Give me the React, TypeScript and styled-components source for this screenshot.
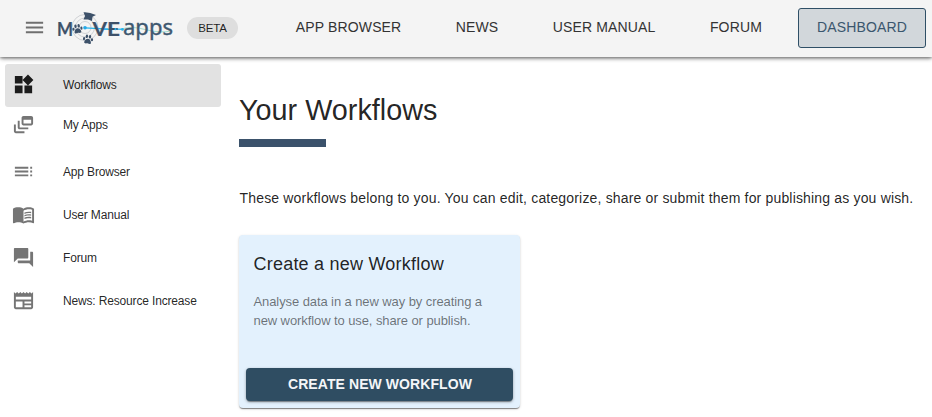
import React from 'react';
import styled, { createGlobalStyle } from 'styled-components';
import type { IconType } from 'react-icons';
import { MdMenu, MdWidgets, MdOutlineDynamicFeed, MdToc, MdMenuBook, MdForum, MdNewspaper } from 'react-icons/md';

const Global = createGlobalStyle`
  * { box-sizing: border-box; }
  body {
    margin: 0;
    background: #fff;
    color: rgba(0, 0, 0, 0.87);
    font-family: "Liberation Sans", Arial, sans-serif;
    overflow: hidden;
  }
`;

const Page = styled.div`
  height: 417px;
  display: flex;
  flex-direction: column;
`;

const Header = styled.header`
  height: 57px;
  flex: none;
  display: flex;
  align-items: center;
  padding: 0 6px 1px 23px;
  background: #f4f4f4;
  box-shadow: 0 2px 4px -1px rgba(0, 0, 0, 0.35), 0 2px 4px rgba(0, 0, 0, 0.2), 0 1px 2px rgba(0, 0, 0, 0.2);
  z-index: 1;
`;

const MenuButton = styled.button`
  display: flex;
  width: 23px;
  height: 23px;
  margin-top: -1px;
  padding: 0;
  border: 0;
  background: none;
  color: #6f6f6f;
  font-size: 23px;
`;

const Logo = styled.svg`
  display: block;
  width: 120px;
  height: 40px;
  margin-left: 10px;
`;

const Badge = styled.span`
  width: 51px;
  height: 22px;
  margin-left: 11px;
  border-radius: 11px;
  background: #dedede;
  font-size: 11.5px;
  letter-spacing: -0.2px;
  line-height: 23px;
  text-align: center;
`;

const Nav = styled.nav`
  margin-left: auto;
  display: flex;
  align-items: center;
`;

const NavLink = styled.a<{ $active?: boolean }>`
  height: 40px;
  padding: 0 ${p => (p.$active ? 18 : 27.2)}px 0 ${p => (p.$active ? 18 : 27.2)}px;
  margin-left: ${p => (p.$active ? 8.8 : 0)}px;
  border: ${p => (p.$active ? '1px solid #2f4f66' : '0')};
  border-radius: 3px;
  background: ${p => (p.$active ? '#d2d7db' : 'transparent')};
  color: ${p => (p.$active ? '#3a566e' : '#333')};
  font-size: 14px;
  letter-spacing: 0.15px;
  line-height: ${p => (p.$active ? 37 : 39)}px;
  white-space: nowrap;
`;

const Body = styled.div`
  flex: 1;
  display: flex;
`;

const Sidebar = styled.aside`
  width: 239px;
  flex: none;
  padding: 7px 18px 0 5px;
`;

const SideItem = styled.a<{ $active?: boolean; $compact?: boolean }>`
  height: ${p => (p.$compact ? 36 : 43)}px;
  margin-bottom: ${p => (p.$compact ? 7 : 0)}px;
  display: flex;
  align-items: center;
  padding: 0 0 ${p => (p.$active ? 2 : 0)}px 7px;
  border-radius: 3px;
  background: ${p => (p.$active ? '#e2e2e2' : 'transparent')};
  color: rgba(0, 0, 0, 0.87);
  font-size: 12px;
  letter-spacing: -0.16px;

  svg {
    width: 23px;
    height: 23px;
    margin-right: 28px;
    margin-top: ${p => (p.$compact ? -2 : 0)}px;
    color: ${p => (p.$active ? '#1c1c1c' : '#757575')};
  }
`;

const Main = styled.main`
  flex: 1;
  padding: 35px 0 0;
`;

const Title = styled.h1`
  margin: 0;
  font-size: 28.8px;
  font-weight: 400;
  line-height: 36px;
`;

const Rule = styled.div`
  width: 87px;
  height: 8px;
  margin-top: 11px;
  background: #3b526b;
`;

const Intro = styled.p`
  margin: 41px 0 0 0.5px;
  font-size: 14px;
  letter-spacing: 0.17px;
  line-height: 20px;
  white-space: nowrap;
`;

const Card = styled.section`
  width: 281px;
  height: 173px;
  margin-top: 27px;
  display: flex;
  flex-direction: column;
  padding: 17px 7px 7px;
  border-radius: 4px;
  background: #e3f1fd;
  box-shadow: 0 2px 1px -1px rgba(0, 0, 0, 0.3), 0 1px 1px rgba(0, 0, 0, 0.2), 0 1px 3px rgba(0, 0, 0, 0.14);
`;

const CardTitle = styled.h2`
  margin: 0 7.5px;
  font-size: 18px;
  font-weight: 400;
  letter-spacing: 0.22px;
  line-height: 24px;
`;

const CardText = styled.p`
  margin: 16px 7.5px 0;
  color: rgba(0, 0, 0, 0.54);
  font-size: 13px;
  letter-spacing: -0.09px;
  line-height: 19px;
  white-space: nowrap;
`;

const PrimaryButton = styled.button`
  height: 33px;
  margin-top: auto;
  padding: 0 0 2px 1px;
  border: 0;
  border-radius: 4px;
  background: #2f4d62;
  color: #f4f6f8;
  font: 700 14px "Liberation Sans", Arial, sans-serif;
  letter-spacing: 0.08px;
  box-shadow: 0 2px 1px -1px rgba(0, 0, 0, 0.3), 0 1px 3px rgba(0, 0, 0, 0.35);
`;

const NAV = ['APP BROWSER', 'NEWS', 'USER MANUAL', 'FORUM', 'DASHBOARD'];

const SIDE: { label: string; Icon: IconType }[] = [
  { label: 'Workflows', Icon: MdWidgets },
  { label: 'My Apps', Icon: MdOutlineDynamicFeed },
  { label: 'App Browser', Icon: MdToc },
  { label: 'User Manual', Icon: MdMenuBook },
  { label: 'Forum', Icon: MdForum },
  { label: 'News: Resource Increase', Icon: MdNewspaper },
];

function Paw({ x, y, r }: { x: number; y: number; r: number }) {
  return (
    <g transform={`translate(${x} ${y}) rotate(${r})`} fill="#3d5169">
      <path d="M0-.7C1.7-.7 3.4 1.5 3.4 3S1.8 4.4 0 3.8C-1.8 4.4-3.4 4.5-3.4 3S-1.7-.7 0-.7Z" />
      <ellipse cx="-1.6" cy="-3" rx="1.2" ry="1.8" />
      <ellipse cx="1.6" cy="-3" rx="1.2" ry="1.8" />
      <ellipse cx="-4" cy="-.3" rx="1.1" ry="1.6" />
      <ellipse cx="4" cy="-.3" rx="1.1" ry="1.6" />
    </g>
  );
}

function MoveAppsLogo() {
  return (
    <Logo viewBox="56 8 120 40" aria-label="MoveApps">
      <g fill="none" stroke="#d0d2d5" strokeWidth="1">
        <circle cx="85" cy="27.5" r="13" />
        <circle cx="85" cy="27.5" r="9.5" />
        <circle cx="85" cy="27.5" r="6" />
      </g>
      <path d="M83.500 12.300Q89 11.800 96 15L92.500 16.800L92 21L88 19.500L83.500 19.500L85 16Z" fill="#3d5169" />
      <Paw x={77.5} y={29} r={-8} />
      <Paw x={88} y={39.5} r={8} />
      <path d="M85 27.800L108 29.200" stroke="#25b4ee" strokeWidth="1.200" />
      <path d="M120 29.500Q132 25.500 145 29.500T171 31" fill="none" stroke="#a6dcd0" strokeWidth="1.200" />
      <path d="M103 29.200H123" stroke="#25b4ee" strokeWidth="1.200" />
      <circle cx="85" cy="27.8" r="1.8" fill="#25a9e8" />
      <g fill="#3d5169" stroke="#3d5169" strokeWidth="0.2" fontFamily="Lato, sans-serif" fontWeight="700" fontSize="18">
        <text x="57" y="35.500" textLength="16" lengthAdjust="spacingAndGlyphs">M</text>
        <text x="92.500" y="35.500" textLength="14.500" lengthAdjust="spacingAndGlyphs">V</text>
        <text x="107" y="35.500" textLength="13" lengthAdjust="spacingAndGlyphs">E</text>
      </g>
      <text x="123" y="35.300" fill="#3f5870" stroke="#3f5870" strokeWidth="0.4" fontFamily="Noto Sans, sans-serif" fontSize="22.5" textLength="50" lengthAdjust="spacingAndGlyphs">apps</text>
      <circle cx="115.500" cy="29.200" r="1.100" fill="#25b4ee" />
      <circle cx="122.500" cy="29.400" r="1.400" fill="#25b4ee" />
    </Logo>
  );
}

export default function App() {
  return (
    <Page>
      <Global />
      <Header>
        <MenuButton aria-label="Menu"><MdMenu /></MenuButton>
        <MoveAppsLogo />
        <Badge>BETA</Badge>
        <Nav>
          {NAV.map(n => <NavLink key={n} $active={n === 'DASHBOARD'}>{n}</NavLink>)}
        </Nav>
      </Header>
      <Body>
        <Sidebar>
          {SIDE.map(({ label, Icon }, i) => (
            <SideItem key={label} $active={i === 0} $compact={i === 1}><Icon />{label}</SideItem>
          ))}
        </Sidebar>
        <Main>
          <Title>Your Workflows</Title>
          <Rule />
          <Intro>These workflows belong to you. You can edit, categorize, share or submit them for publishing as you wish.</Intro>
          <Card>
            <CardTitle>Create a new Workflow</CardTitle>
            <CardText>Analyse data in a new way by creating a<br />new workflow to use, share or publish.</CardText>
            <PrimaryButton>CREATE NEW WORKFLOW</PrimaryButton>
          </Card>
        </Main>
      </Body>
    </Page>
  );
}
